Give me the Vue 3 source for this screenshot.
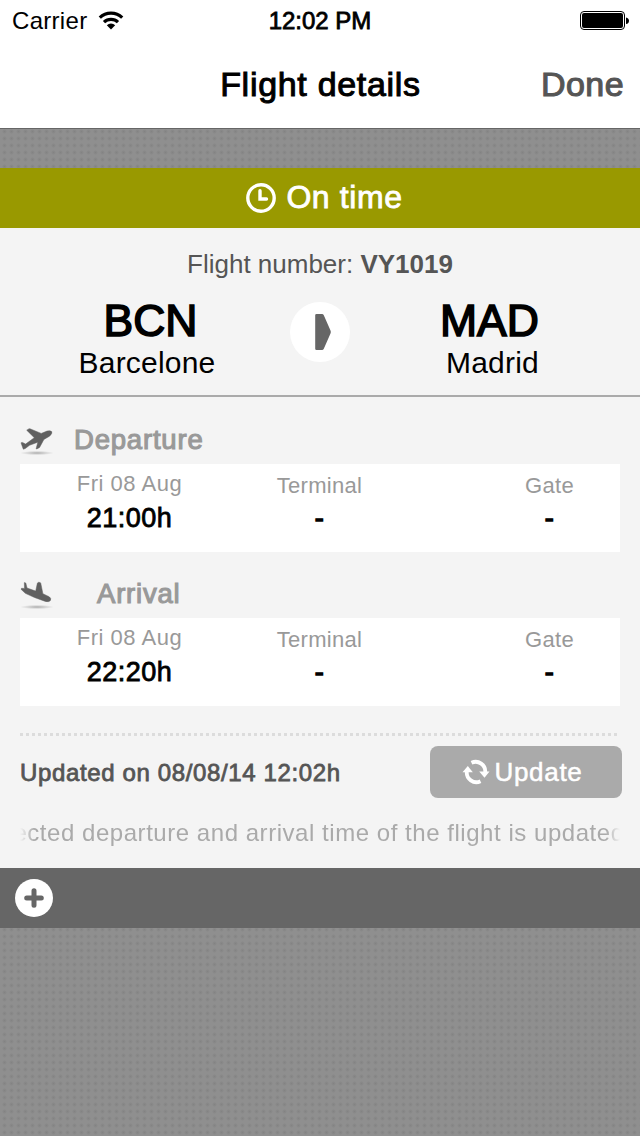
<template>
  <div class="screen">
    <div class="status-bar">
      <div class="carrier">
        <span>Carrier</span>
        <svg class="wifi" width="26" height="20" viewBox="0 0 26 20">
          <path d="M1.8 6.6a16 16 0 0 1 22.4 0" />
          <path d="M6 11.200a10 10 0 0 1 14 0" />
          <path class="wifi-dot" d="M13 18.6l-4.2-4.4a6 6 0 0 1 8.4 0z" />
        </svg>
      </div>
      <div class="clock medium">12:02 PM</div>
      <svg class="battery" width="50" height="20" viewBox="0 0 50 20">
        <rect x="0.5" y="0.5" width="44" height="18" rx="3.5" fill="#fff" stroke="#000" />
        <rect x="2" y="2" width="41" height="15" rx="2" />
        <path d="M46 6.5c4 .6 4 6 0 6.600z" />
      </svg>
    </div>
    <div class="nav-bar">
      <div class="title medium">Flight details</div>
      <div class="done medium">Done</div>
    </div>

    <div class="panel">
      <div class="banner">
        <svg width="32" height="32" viewBox="0 0 32 32">
          <circle cx="16" cy="16" r="13.2" />
          <path d="M15 8.700v8.300h6.500" />
        </svg>
        <span class="status medium">{{ flight.status }}</span>
      </div>

      <div class="route">
        <div class="number">Flight number: <b>{{ flight.number }}</b></div>
        <div class="airports">
          <div class="airport from">
            <div class="code medium">BCN</div>
            <div class="city">Barcelone</div>
          </div>
          <svg class="arrow" width="60" height="60" viewBox="0 0 60 60">
            <circle cx="30" cy="30" r="30" fill="#fff" />
            <path
              d="M26.500 12h5.500q1.200 0 1.800 1.200l6.700 15.300q.7 1.500 0 3l-6.700 15.300q-.6 1.200-1.800 1.200h-5.500q-1.300 0-1.300-1.300V13.300q0-1.300 1.300-1.300z"
              fill="#666"
            />
          </svg>
          <div class="airport to">
            <div class="code medium">MAD</div>
            <div class="city">Madrid</div>
          </div>
        </div>
      </div>

      <div v-for="leg in legs" :key="leg.name" class="leg">
        <div class="leg-head" :class="leg.type">
          <svg width="34" height="32" viewBox="0 0 34 32">
            <defs>
              <radialGradient :id="leg.type">
                <stop offset="0" stop-color="#aaa" />
                <stop offset="1" stop-color="#bbb" stop-opacity="0" />
              </radialGradient>
            </defs>
            <ellipse cx="17" cy="29" rx="17" ry="2.200" :fill="`url(#${leg.type})`" />
            <path :d="leg.plane" />
          </svg>
          <span class="leg-name">{{ leg.name }}</span>
        </div>
        <div class="card">
          <div class="cell date">
            <div class="label">{{ leg.date }}</div>
            <div class="value">{{ leg.time }}</div>
          </div>
          <div class="cell terminal">
            <div class="label">Terminal</div>
            <div class="value dash">-</div>
          </div>
          <div class="cell gate">
            <div class="label">Gate</div>
            <div class="value dash">-</div>
          </div>
        </div>
      </div>

      <div class="dots"></div>
      <div class="update-row">
        <div class="updated">Updated on 08/08/14 12:02h</div>
        <button class="update">
          <svg width="28" height="26" viewBox="0 0 28 26">
            <path class="ring" d="M9.500 3.800A9.600 9.600 0 0 1 23.200 13.500" />
            <path d="M17.200 12.500h10.300l-5 6.200z" />
            <path class="ring" d="M18.500 22.200A9.600 9.600 0 0 1 4.800 12.500" />
            <path d="M.5 13.300h10.300l-5-6.200z" />
          </svg>
          <span>Update</span>
        </button>
      </div>
      <div class="marquee">
        <span>ected departure and arrival time of the flight is updated</span>
      </div>
    </div>

    <div class="toolbar">
      <svg width="38" height="38" viewBox="0 0 38 38">
        <circle cx="19" cy="19" r="19" fill="#fff" />
        <path d="M19 11.700v14.600M11.700 19h14.600" />
      </svg>
    </div>
  </div>
</template>

<script setup>
const flight = {
  status: "On time",
  number: "VY1019",
};

const legs = [
  {
    type: "departure",
    name: "Departure",
    date: "Fri 08 Aug",
    time: "21:00h",
    plane:
      "M6.700 6.200l2-1.300q.6-.3 1.300-.1l11.200 4.600 5.800-2.300q3.500-.9 4.800.6.700 1.800-2.300 4.500l-5.600 3.200-4.300 8-2.700 1.500q-.8.300-.7-.5l1.600-6.200-8.300 3.100-4.200 3.200-2 .7L1 18.800l1.400-.4 3.200 1.700 8.700-6.400z",
  },
  {
    type: "arrival",
    name: "Arrival",
    date: "Fri 08 Aug",
    time: "22:20h",
    plane:
      "M4.300 4.600l1.500.4 1.200 5 8.700 3.100 1.700-8q1.300-1.800 3.300-.2l2.200 10.800 6.200 3q2.500 1.700 1.300 3.800-1.500 1.800-5 .9L14.500 19.500 5.300 15.300 1 11.200l.5-.9 3 .1z",
  },
];
</script>

<style>
body {
  background: #8c8c8c;
}
</style>

<style scoped>
.screen {
  height: 1136px;
  overflow: hidden;
  font-family: "Liberation Sans", Arial, sans-serif;
  color: #000;
  background-color: #8f8f8f;
  background-image: radial-gradient(circle, #838383 0, #888 1px, transparent 2.5px);
  background-size: 7px 7px;
  background-position: 1px 2px;
}
.medium,
.leg-name,
.value,
.updated,
.update {
  -webkit-text-stroke: 0.8px currentColor;
}

.status-bar {
  height: 41px;
  box-sizing: border-box;
  padding: 0 10px 0 12px;
  display: grid;
  grid-template-columns: 1fr auto 1fr;
  align-items: center;
  background: #fff;
  font-size: 24px;
}
.carrier {
  display: flex;
  align-items: center;
  gap: 11px;
  letter-spacing: 0.3px;
}
.clock {
  margin-right: 2px;
}
.wifi path {
  fill: none;
  stroke: #000;
  stroke-width: 3.200;
}
.wifi .wifi-dot {
  fill: #000;
  stroke: none;
}
.battery {
  justify-self: end;
}

.nav-bar {
  height: 88px;
  box-sizing: border-box;
  padding: 0 16px 0 17px;
  display: grid;
  grid-template-columns: 1fr auto 1fr;
  background: #fff;
  border-bottom: 1px solid #666;
  font-size: 34px;
  line-height: 87px;
  letter-spacing: 0.7px;
}
.title {
  grid-column: 2;
  -webkit-text-stroke-width: 1px;
}
.done {
  text-align: right;
  color: #555;
  letter-spacing: 0.4px;
  -webkit-text-stroke-width: 1.100px;
}

.panel {
  margin-top: 39px;
  height: 700px;
  box-sizing: border-box;
  background: #f4f4f4;
}
.banner {
  height: 60px;
  padding-left: 8px;
  box-sizing: border-box;
  display: flex;
  align-items: center;
  justify-content: center;
  gap: 9px;
  background: #990;
  color: #fff;
  font-size: 32px;
  letter-spacing: 0.6px;
}
.status {
  padding-bottom: 2px;
}
.banner svg {
  fill: none;
  stroke: #fff;
  stroke-width: 3.4;
  stroke-linecap: round;
}
.route {
  height: 169px;
  box-sizing: border-box;
  border-bottom: 2px solid #aaa;
  padding-top: 18px;
}
.number {
  font-size: 26px;
  line-height: 37px;
  text-align: center;
  color: #555;
}
.airports {
  display: grid;
  grid-template-columns: 290px 60px 290px;
}
.airport {
  padding-top: 13px;
  text-align: center;
}
.from {
  padding-left: 10px;
}
.code {
  font-size: 44.500px;
  line-height: 50px;
  -webkit-text-stroke-width: 1.600px;
}
.city {
  font-size: 30px;
  line-height: 33px;
  letter-spacing: 0.2px;
}
.from .code {
  margin-left: 1px;
}
.from .city {
  margin-right: 6px;
}
.to .code {
  margin-right: 11px;
}
.to .city {
  margin-right: 5px;
}
.arrow {
  margin-top: 19px;
}

.leg {
  height: 154px;
  padding: 27px 20px 0;
  box-sizing: border-box;
}
.leg-head {
  height: 40px;
  display: flex;
  color: #999;
  font-size: 27.500px;
  line-height: 32px;
  letter-spacing: 0.8px;
}
.leg-head path {
  fill: #606060;
  stroke: #606060;
  stroke-width: 0.5;
}
.leg-name {
  margin-left: 20px;
  -webkit-text-stroke-width: 1.100px;
}
.arrival .leg-name {
  margin-left: 43px;
}
.card {
  height: 88px;
  display: grid;
  grid-template-columns: 219px 162px 219px;
  background: #fff;
}
.cell {
  text-align: center;
}
.terminal {
  margin-left: -1px;
}
.gate {
  padding-left: 78px;
}
.label {
  height: 37px;
  font-size: 22px;
  line-height: 43px;
  letter-spacing: 0.3px;
  color: #999;
}
.date .label {
  line-height: 40px;
  letter-spacing: 0.5px;
}
.value {
  font-size: 27px;
  line-height: 34px;
  letter-spacing: 0.5px;
}
.dash {
  -webkit-text-stroke-width: 1.400px;
}

.dots {
  margin: 28px 22px 0 20px;
  height: 3px;
  background: repeating-linear-gradient(90deg, #dcdcdc 0 3px, transparent 3px 6px);
}
.update-row {
  margin: 10px 18px 0 20px;
  display: flex;
  justify-content: space-between;
  align-items: center;
}
.updated {
  padding-top: 2px;
  font-size: 24px;
  letter-spacing: 0.63px;
  color: #555;
}
.update {
  width: 192px;
  height: 52px;
  padding: 0 7px 0 0;
  border: 0;
  border-radius: 8px;
  display: flex;
  align-items: center;
  justify-content: center;
  gap: 4px;
  background: #aaa;
  color: #fff;
  font: 26px "Liberation Sans", Arial, sans-serif;
  letter-spacing: 0.7px;
  -webkit-text-stroke-width: 0.5px;
}
.update svg {
  fill: #fff;
}
.update .ring {
  fill: none;
  stroke: #fff;
  stroke-width: 3.800;
}
.marquee {
  margin: 17px 20px 0;
  height: 36px;
  display: flex;
  justify-content: center;
  overflow: hidden;
  white-space: nowrap;
  font-size: 24px;
  line-height: 36px;
  letter-spacing: 0.54px;
  color: #aaa;
  mask-image: linear-gradient(90deg, transparent, #000 14px calc(100% - 14px), transparent);
}
.marquee span {
  margin-right: 2px;
}

.toolbar {
  height: 60px;
  padding-left: 15px;
  display: flex;
  align-items: center;
  background: #666;
}
.toolbar path {
  stroke: #666;
  stroke-width: 5;
  stroke-linecap: round;
}
</style>
